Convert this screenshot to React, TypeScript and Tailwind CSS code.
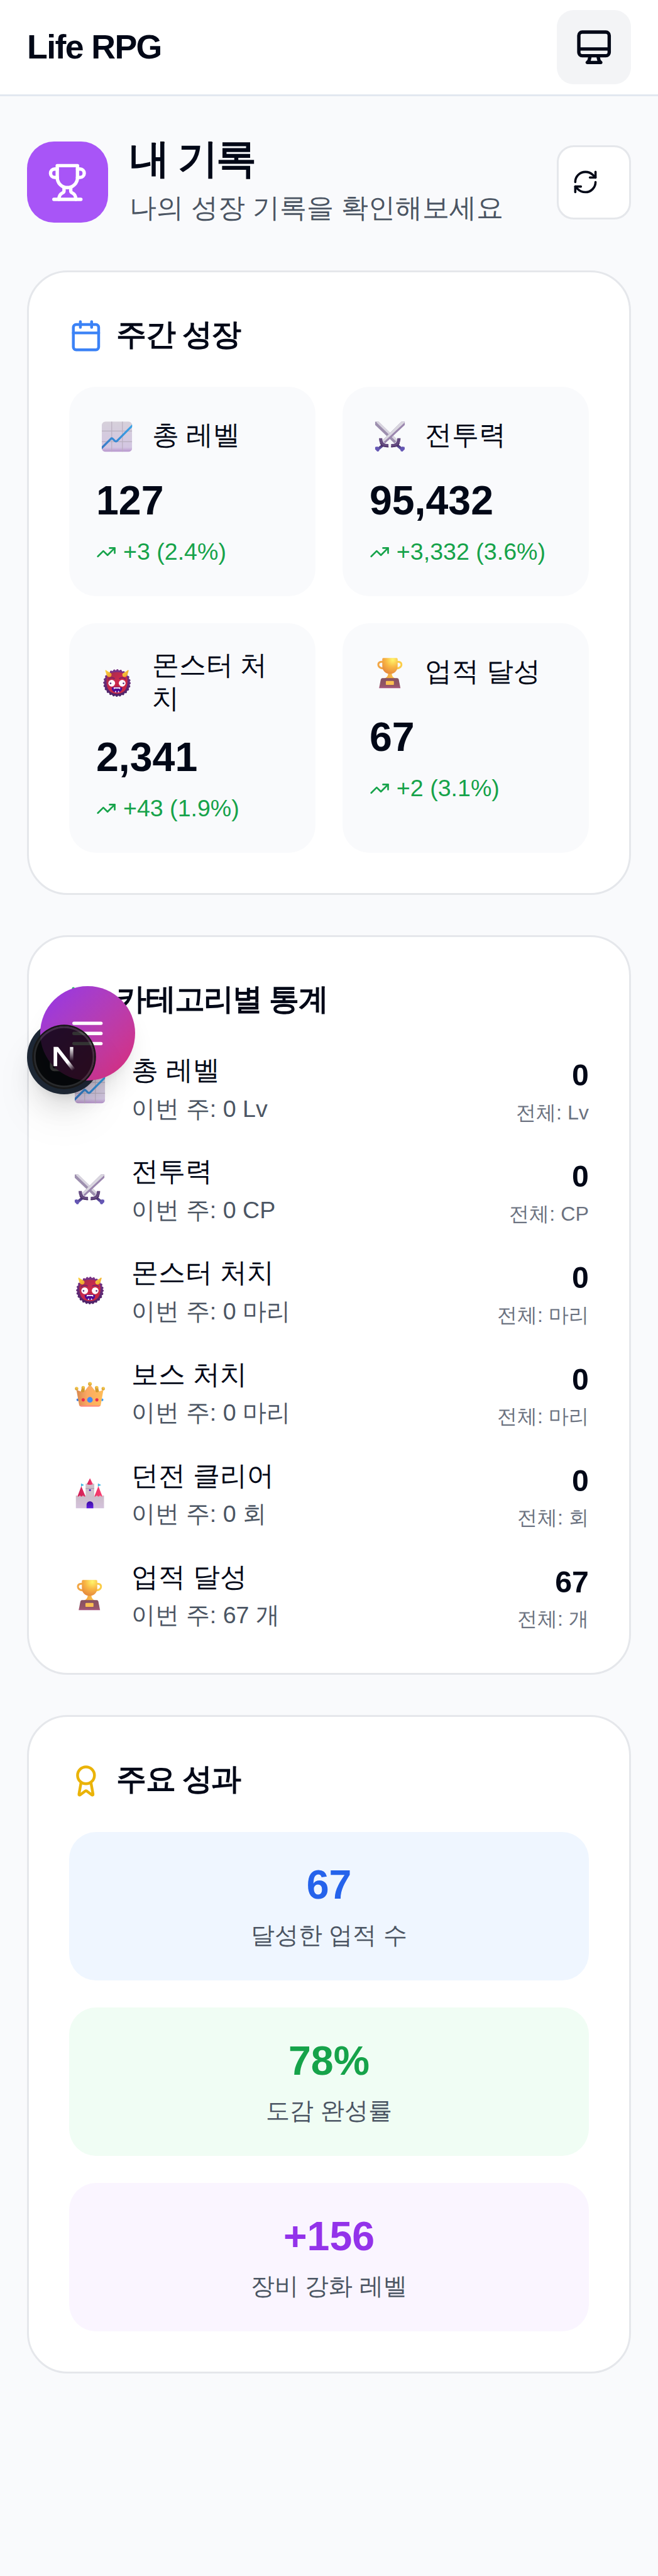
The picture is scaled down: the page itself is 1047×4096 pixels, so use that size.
import type { ReactNode } from "react";
import { Award, BarChart3, Calendar, RefreshCw, Square, TrendingUp } from "lucide-react";

function DesktopIcon() {
  return (
    <svg viewBox="0 0 24 24" className="size-6" fill="none" stroke="currentColor" strokeWidth="2" strokeLinecap="round" strokeLinejoin="round">
      <path d="M9.75 17L9 20l-1 1h8l-1-1-.75-3M3 13h18M5 17h14a2 2 0 002-2V5a2 2 0 00-2-2H5a2 2 0 00-2 2v10a2 2 0 002 2z" />
    </svg>
  );
}

function TrophyOutline() {
  return (
    <svg viewBox="0 0 24 24" className="size-6 text-white" fill="none" stroke="currentColor" strokeWidth="2" strokeLinecap="round" strokeLinejoin="round">
      <path d="M6 9H4.5a2.5 2.5 0 0 1 0-5H6" />
      <path d="M18 9h1.5a2.5 2.5 0 0 0 0-5H18" />
      <path d="M4 22h16" />
      <path d="M10 14.66V17c0 .55-.47.98-.97 1.21C7.85 18.75 7 20.24 7 22" />
      <path d="M14 14.66V17c0 .55.47.98.97 1.21C16.15 18.75 17 20.24 17 22" />
      <path d="M18 2H6v7a6 6 0 0 0 12 0V2Z" />
    </svg>
  );
}

function ChartEmoji() {
  return (
    <svg viewBox="249 492 216 216" className="mr-px size-6 shrink-0">
      <defs>
        <linearGradient id="chart-bg" x1="0" y1="0" x2="0" y2="1">
          <stop offset="0" stopColor="#d6d0da" />
          <stop offset="0.85" stopColor="#d3c6e2" />
          <stop offset="1" stopColor="#b692cc" />
        </linearGradient>
        <linearGradient id="chart-line" x1="0" y1="1" x2="1" y2="0">
          <stop offset="0" stopColor="#3a78c4" />
          <stop offset="1" stopColor="#35a5ea" />
        </linearGradient>
        <clipPath id="chart-clip">
          <rect x="279" y="516" width="162" height="162" rx="20" />
        </clipPath>
      </defs>
      <g clipPath="url(#chart-clip)">
        <rect x="279" y="516" width="162" height="162" fill="url(#chart-bg)" />
        <path d="M332 516v162M389 516v162M279 567h162M279 624h162" stroke="#b9afbf" strokeWidth="4" />
        <path d="M272 664L328 608Q332 603 338 609L348 619Q355 626 362 618L448 532" fill="none" stroke="url(#chart-line)" strokeWidth="11" />
      </g>
    </svg>
  );
}

function SwordsEmoji() {
  return (
    <svg viewBox="-21 -3 216 216" className="mr-px size-6 shrink-0">
      <defs>
        <linearGradient id="sword-grip" x1="0" y1="0" x2="0" y2="1">
          <stop offset="0" stopColor="#3f2458" />
          <stop offset="1" stopColor="#6a62c0" />
        </linearGradient>
      </defs>
      <path d="M9 22H27L128 120L112 138L9 40Z" fill="#9d8fae" />
      <path d="M18 22H29L132 122L124 130L16 26Z" fill="#d8d4df" />
      <path d="M167 22H149L48 122L62 138L167 40Z" fill="#9b86ae" />
      <path d="M167 22H149L48 122L55 130L165 28Z" fill="#d9d6df" />
      <path d="M48 140L58 150L30 174L20 162Z" fill="url(#sword-grip)" />
      <path d="M128 140L118 150L146 174L156 162Z" fill="url(#sword-grip)" />
      <path d="M38 110C38 136 52 151 80 150" fill="none" stroke="#654b80" strokeWidth="17" />
      <path d="M136 110C136 136 122 151 94 150" fill="none" stroke="#654b80" strokeWidth="17" />
      <path d="M80 156C58 158 42 150 36 136M94 156C116 158 132 150 138 136" fill="none" stroke="#4b3066" strokeWidth="5" />
      <path d="M9 157L22 155L33 168L29 180L20 181L9 169Z" fill="#6557b4" />
      <path d="M166 157L153 155L142 168L146 180L155 181L167 169Z" fill="#6557b4" />
    </svg>
  );
}

function OgreEmoji() {
  return (
    <svg viewBox="-21 537 216 216" className="mr-px size-6 shrink-0">
      <defs>
        <linearGradient id="ogre-mane" x1="0" y1="0" x2="0" y2="1">
          <stop offset="0" stopColor="#7b3386" />
          <stop offset="1" stopColor="#4d2368" />
        </linearGradient>
        <linearGradient id="ogre-face" x1="0" y1="0" x2="1" y2="1">
          <stop offset="0" stopColor="#9c2c50" />
          <stop offset="0.45" stopColor="#c92a4d" />
          <stop offset="1" stopColor="#c8283f" />
        </linearGradient>
        <linearGradient id="ogre-horn" x1="0" y1="0" x2="1" y2="1">
          <stop offset="0" stopColor="#ffd843" />
          <stop offset="1" stopColor="#e89a2c" />
        </linearGradient>
      </defs>
      <circle cx="90" cy="641" r="69" fill="url(#ogre-mane)" />
      <circle cx="90" cy="641" r="68" fill="none" stroke="url(#ogre-mane)" strokeWidth="11" strokeLinecap="round" strokeDasharray="1 16.8" />
      <path d="M90 583C128 583 145 596 146 624C147 662 137 696 90 698C43 696 33 662 34 624C35 596 52 583 90 583Z" fill="url(#ogre-face)" />
      <path d="M27 574C30 570 34 573 38 577L59 590Q66 603 53 609Q40 610 35 600Z" fill="url(#ogre-horn)" />
      <path d="M153 574C150 570 146 573 142 577L121 590Q114 603 127 609Q140 610 145 600Z" fill="url(#ogre-horn)" />
      <path d="M45 620Q58 608 76 617M135 620Q122 608 104 617" fill="none" stroke="#7b2464" strokeWidth="6" strokeLinecap="round" />
      <circle cx="62" cy="642" r="18" fill="#fff" />
      <circle cx="118" cy="642" r="18" fill="#fff" />
      <circle cx="56" cy="643" r="4.500" fill="#5b2a78" />
      <circle cx="125" cy="643" r="4.500" fill="#5b2a78" />
      <path d="M82 650Q90 662 98 650" fill="#b81f45" />
      <path d="M62 665Q90 659 118 665Q118 691 90 692Q62 691 62 665Z" fill="#4e0d95" />
      <path d="M73 664H107V675L102 670H78L73 675Z" fill="#fff" />
      <path d="M78 690L83 681L87 691ZM94 691L98 681L103 690Z" fill="#fff" />
    </svg>
  );
}

function TrophyEmoji() {
  return (
    <svg viewBox="69 1077 216 216" className="mr-px size-6 shrink-0">
      <defs>
        <radialGradient id="cup-body" cx="0.68" cy="0.12" r="0.9">
          <stop offset="0" stopColor="#fff66b" />
          <stop offset="0.5" stopColor="#f9b845" />
          <stop offset="1" stopColor="#e68a3d" />
        </radialGradient>
        <linearGradient id="cup-stem" x1="0" y1="0" x2="1" y2="0">
          <stop offset="0" stopColor="#ef9b3c" />
          <stop offset="1" stopColor="#fbc94c" />
        </linearGradient>
        <linearGradient id="cup-base" x1="0" y1="0" x2="0" y2="1">
          <stop offset="0" stopColor="#85505f" />
          <stop offset="0.8" stopColor="#96566a" />
          <stop offset="1" stopColor="#aa5782" />
        </linearGradient>
      </defs>
      <path d="M142 1122C126 1120 115 1125 116 1138C118 1152 132 1158 146 1156" fill="none" stroke="#f2a645" strokeWidth="10" />
      <path d="M213 1122C229 1120 240 1125 239 1138C237 1152 223 1158 209 1156" fill="none" stroke="#fbcd48" strokeWidth="10" />
      <path d="M168 1180H188C187 1198 195 1205 208 1211H148C161 1205 169 1198 168 1180Z" fill="url(#cup-stem)" />
      <path d="M143 1101H213Q219 1101 219 1107V1145C219 1171 200 1186 178 1186C156 1186 137 1171 137 1145V1107Q137 1101 143 1101Z" fill="url(#cup-body)" />
      <path d="M138 1209H216Q223 1209 225 1216L234 1262H120L129 1216Q131 1209 138 1209Z" fill="url(#cup-base)" />
      <rect x="156" y="1224" width="43" height="21" rx="4" fill="#fbc052" />
    </svg>
  );
}

function CrownEmoji() {
  return (
    <svg viewBox="69 -3 216 216" className="mr-px size-6 shrink-0">
      <defs>
        <linearGradient id="crown-body" x1="0" y1="0" x2="1" y2="0">
          <stop offset="0" stopColor="#d9884e" />
          <stop offset="0.4" stopColor="#fba962" />
          <stop offset="1" stopColor="#ffbd58" />
        </linearGradient>
        <radialGradient id="crown-ball" cx="0.6" cy="0.3" r="0.8">
          <stop offset="0" stopColor="#fbcf4b" />
          <stop offset="1" stopColor="#cb932c" />
        </radialGradient>
      </defs>
      <path d="M136 82H152V104H130ZM208 82H224L230 104H208Z" fill="#d3992f" />
      <circle cx="115" cy="144" r="7" fill="#3c7fe0" />
      <circle cx="245" cy="144" r="7" fill="#3c9df5" />
      <path d="M108 90L145 105L173 70Q180 65 187 70L215 105L252 90L238 170Q236 180 226 180H134Q124 180 122 170Z" fill="url(#crown-body)" />
      <path d="M123 174Q126 180 134 180H226Q234 180 237 174Z" fill="#ff8585" />
      <circle cx="180" cy="59" r="10" fill="url(#crown-ball)" />
      <circle cx="144" cy="79" r="9" fill="url(#crown-ball)" />
      <circle cx="216" cy="79" r="9" fill="url(#crown-ball)" />
      <circle cx="109" cy="84" r="9" fill="url(#crown-ball)" />
      <circle cx="251" cy="84" r="9" fill="url(#crown-ball)" />
      <circle cx="180" cy="144" r="15" fill="#4189f5" />
      <circle cx="144" cy="144" r="8.500" fill="#ee2c4c" />
      <circle cx="217" cy="144" r="8.500" fill="#ee2c4c" />
    </svg>
  );
}

function CastleEmoji() {
  return (
    <svg viewBox="69 537 216 216" className="mr-px size-6 shrink-0">
      <defs>
        <linearGradient id="castle-wall" x1="0" y1="0" x2="0" y2="1">
          <stop offset="0" stopColor="#cbbcc8" />
          <stop offset="1" stopColor="#d4c2dc" />
        </linearGradient>
        <linearGradient id="castle-roof" x1="0" y1="0" x2="1" y2="0">
          <stop offset="0" stopColor="#cf1f57" />
          <stop offset="1" stopColor="#fb3d70" />
        </linearGradient>
        <linearGradient id="castle-gate" x1="0" y1="0" x2="0" y2="1">
          <stop offset="0" stopColor="#3c0fa0" />
          <stop offset="1" stopColor="#5e1be0" />
        </linearGradient>
      </defs>
      <path d="M134 591V608M224 591V608" stroke="#8fb4c8" strokeWidth="3" />
      <path d="M133 590L149 598L133 606ZM223 590L240 598L223 606Z" fill="#3fb6e2" />
      <rect x="157" y="591" width="46" height="70" fill="#cdc0cb" />
      <path d="M157 617H203" stroke="#aa98ab" strokeWidth="4" />
      <path d="M180 562L196 594Q180 600 164 594Z" fill="url(#castle-roof)" />
      <path d="M134 605L157 660H113ZM225 605L247 660H203Z" fill="url(#castle-roof)" />
      <path d="M105 654H113V660H122V655H130V660H139V655H147V660H157V655H168V660H174V655H186V660H192V655H203V660H212V655H221V660H230V655H239V660H247V654H255V722H105Z" fill="url(#castle-wall)" />
      <circle cx="180" cy="626" r="5" fill="#4c14b8" />
      <path d="M162 722V704C162 692 170 685 180 685C190 685 198 692 198 704V722Z" fill="url(#castle-gate)" />
    </svg>
  );
}

function FrameworkMark() {
  return (
    <svg viewBox="60 268 324 324" className="size-9">
      <defs>
        <linearGradient id="mark-diag" gradientUnits="userSpaceOnUse" x1="215" y1="425" x2="272" y2="500">
          <stop offset="0" stopColor="#fff" />
          <stop offset="0.45" stopColor="#fff" />
          <stop offset="1" stopColor="#fff" stopOpacity="0" />
        </linearGradient>
        <linearGradient id="mark-stem" gradientUnits="userSpaceOnUse" x1="261" y1="378" x2="261" y2="452">
          <stop offset="0" stopColor="#fff" />
          <stop offset="1" stopColor="#fff" stopOpacity="0" />
        </linearGradient>
      </defs>
      <rect x="165" y="378" width="19" height="102" fill="#fff" />
      <rect x="252" y="378" width="18" height="74" fill="url(#mark-stem)" />
      <path d="M165 378H189L280 494L265 507Z" fill="url(#mark-diag)" />
    </svg>
  );
}

function Card({ icon, title, children }: { icon: ReactNode; title: string; children: ReactNode }) {
  return (
    <section className="rounded-3xl border-[1.120px] border-[#e5e7eb] bg-white p-[23.880px]">
      <h2 className="mb-4 flex items-center gap-2 text-lg leading-7 font-bold tracking-[-0.035em]">
        {icon}
        <span className="-translate-y-[1.200px]">{title}</span>
      </h2>
      {children}
    </section>
  );
}

const weekly = [
  { icon: <ChartEmoji />, label: "총 레벨", value: "127", change: "+3 (2.4%)" },
  { icon: <SwordsEmoji />, label: "전투력", value: "95,432", change: "+3,332 (3.6%)" },
  { icon: <OgreEmoji />, label: "몬스터 처치", value: "2,341", change: "+43 (1.9%)" },
  { icon: <TrophyEmoji />, label: "업적 달성", value: "67", change: "+2 (3.1%)" },
];

const categories = [
  { icon: <ChartEmoji />, label: "총 레벨", week: "이번 주: 0 Lv", value: "0", total: "전체: Lv" },
  { icon: <SwordsEmoji />, label: "전투력", week: "이번 주: 0 CP", value: "0", total: "전체: CP" },
  { icon: <OgreEmoji />, label: "몬스터 처치", week: "이번 주: 0 마리", value: "0", total: "전체: 마리" },
  { icon: <CrownEmoji />, label: "보스 처치", week: "이번 주: 0 마리", value: "0", total: "전체: 마리" },
  { icon: <CastleEmoji />, label: "던전 클리어", week: "이번 주: 0 회", value: "0", total: "전체: 회" },
  { icon: <TrophyEmoji />, label: "업적 달성", week: "이번 주: 67 개", value: "67", total: "전체: 개" },
];

const highlights = [
  { value: "67", label: "달성한 업적 수", box: "bg-[#eff6ff]", text: "text-[#2563eb]" },
  { value: "78%", label: "도감 완성률", box: "bg-[#f0fdf4]", text: "text-[#16a34a]" },
  { value: "+156", label: "장비 강화 레벨", box: "bg-[#faf5ff]", text: "text-[#9333ea]" },
];

export default function App() {
  return (
    <div className="relative h-[1525.700px] w-[390px] overflow-hidden bg-[#f9fafc] font-['Liberation_Sans',sans-serif] text-[#020817] [zoom:2.684615]">
      <header className="flex h-[57px] items-center justify-between border-b-[1.120px] border-[#e2e8f0] bg-white px-4">
        <h1 className="text-xl font-bold tracking-[-0.030em]">Life RPG</h1>
        <button className="flex size-11 items-center justify-center rounded-[10px] bg-[#f3f4f6]">
          <DesktopIcon />
        </button>
      </header>

      <main className="flex flex-col gap-6 px-4 pt-[23px]">
        <div className="flex items-center justify-between">
          <div className="flex items-center gap-[12.800px]">
            <div className="flex size-12 items-center justify-center rounded-2xl bg-[#a855f7]">
              <TrophyOutline />
            </div>
            <div>
              <h2 className="-translate-y-[1.800px] text-2xl leading-8 font-bold tracking-[-0.040em]">내 기록</h2>
              <p className="-translate-y-px text-base leading-6 text-[#4b5563]">나의 성장 기록을 확인해보세요</p>
            </div>
          </div>
          <button className="flex size-11 items-center rounded-[10px] border-[1.120px] border-[#e5e7eb] bg-white pl-2">
            <RefreshCw className="size-4" />
          </button>
        </div>

        <Card icon={<Calendar className="size-5 text-[#3b82f6]" />} title="주간 성장">
          <div className="grid grid-cols-2 gap-4">
            {weekly.map((s) => (
              <div key={s.label} className="rounded-2xl bg-[#f9fafc] p-4">
                <div className="mb-2 flex min-h-7 items-center gap-2">
                  {s.icon}
                  <span className="-translate-y-[1.200px] text-base leading-5 font-medium">{s.label}</span>
                </div>
                <div className="text-2xl leading-8 font-bold">{s.value}</div>
                <div className="mt-1 flex items-center gap-1 text-sm leading-5 text-[#16a34a]">
                  <TrendingUp className="size-3" />
                  {s.change}
                </div>
              </div>
            ))}
          </div>
        </Card>

        <Card icon={<BarChart3 className="size-5 text-[#22c55e]" />} title="카테고리별 통계">
          <ul className="flex flex-col gap-4">
            {categories.map((c) => (
              <li key={c.label} className="flex h-11 items-center justify-between">
                <div className="flex items-center gap-3">
                  {c.icon}
                  <div>
                    <div className="-translate-y-[1.200px] text-base leading-6 font-medium">{c.label}</div>
                    <div className="text-sm leading-5 text-[#4b5563]">{c.week}</div>
                  </div>
                </div>
                <div className="text-right">
                  <div className="text-lg leading-7 font-bold">{c.value}</div>
                  <div className="text-xs leading-4 text-[#6b7280]">{c.total}</div>
                </div>
              </li>
            ))}
          </ul>
        </Card>

        <Card icon={<Award className="size-5 text-[#eab308]" />} title="주요 성과">
          <div className="flex flex-col gap-4">
            {highlights.map((h) => (
              <div key={h.label} className={`rounded-2xl p-4 text-center ${h.box}`}>
                <div className={`text-2xl leading-8 font-bold ${h.text}`}>{h.value}</div>
                <div className="mt-1 -translate-y-[0.500px] text-sm leading-5 text-[#4b5563]">{h.label}</div>
              </div>
            ))}
          </div>
        </Card>
      </main>

      <button className="absolute top-[604px] left-4 flex size-11 items-center justify-center rounded-full bg-[#1f2937] text-white shadow-lg">
        <Square className="size-5" />
      </button>
      <button className="absolute top-[584px] left-6 flex size-14 items-center justify-center rounded-full bg-linear-135 from-[#9333ea] to-[#db2777] text-white shadow-lg">
        <svg viewBox="0 0 24 24" className="size-6" fill="none" stroke="currentColor" strokeWidth="2" strokeLinecap="round">
          <path d="M4 6h16M4 12h16M4 18h16" />
        </svg>
      </button>
      <div className="absolute top-[608px] left-5 size-9 rounded-full bg-black/80 shadow-[0_0_0_1px_#171717,inset_0_0_0_1px_rgba(255,255,255,0.14),0_16px_32px_-8px_rgba(0,0,0,0.24)]">
        <FrameworkMark />
      </div>
    </div>
  );
}
